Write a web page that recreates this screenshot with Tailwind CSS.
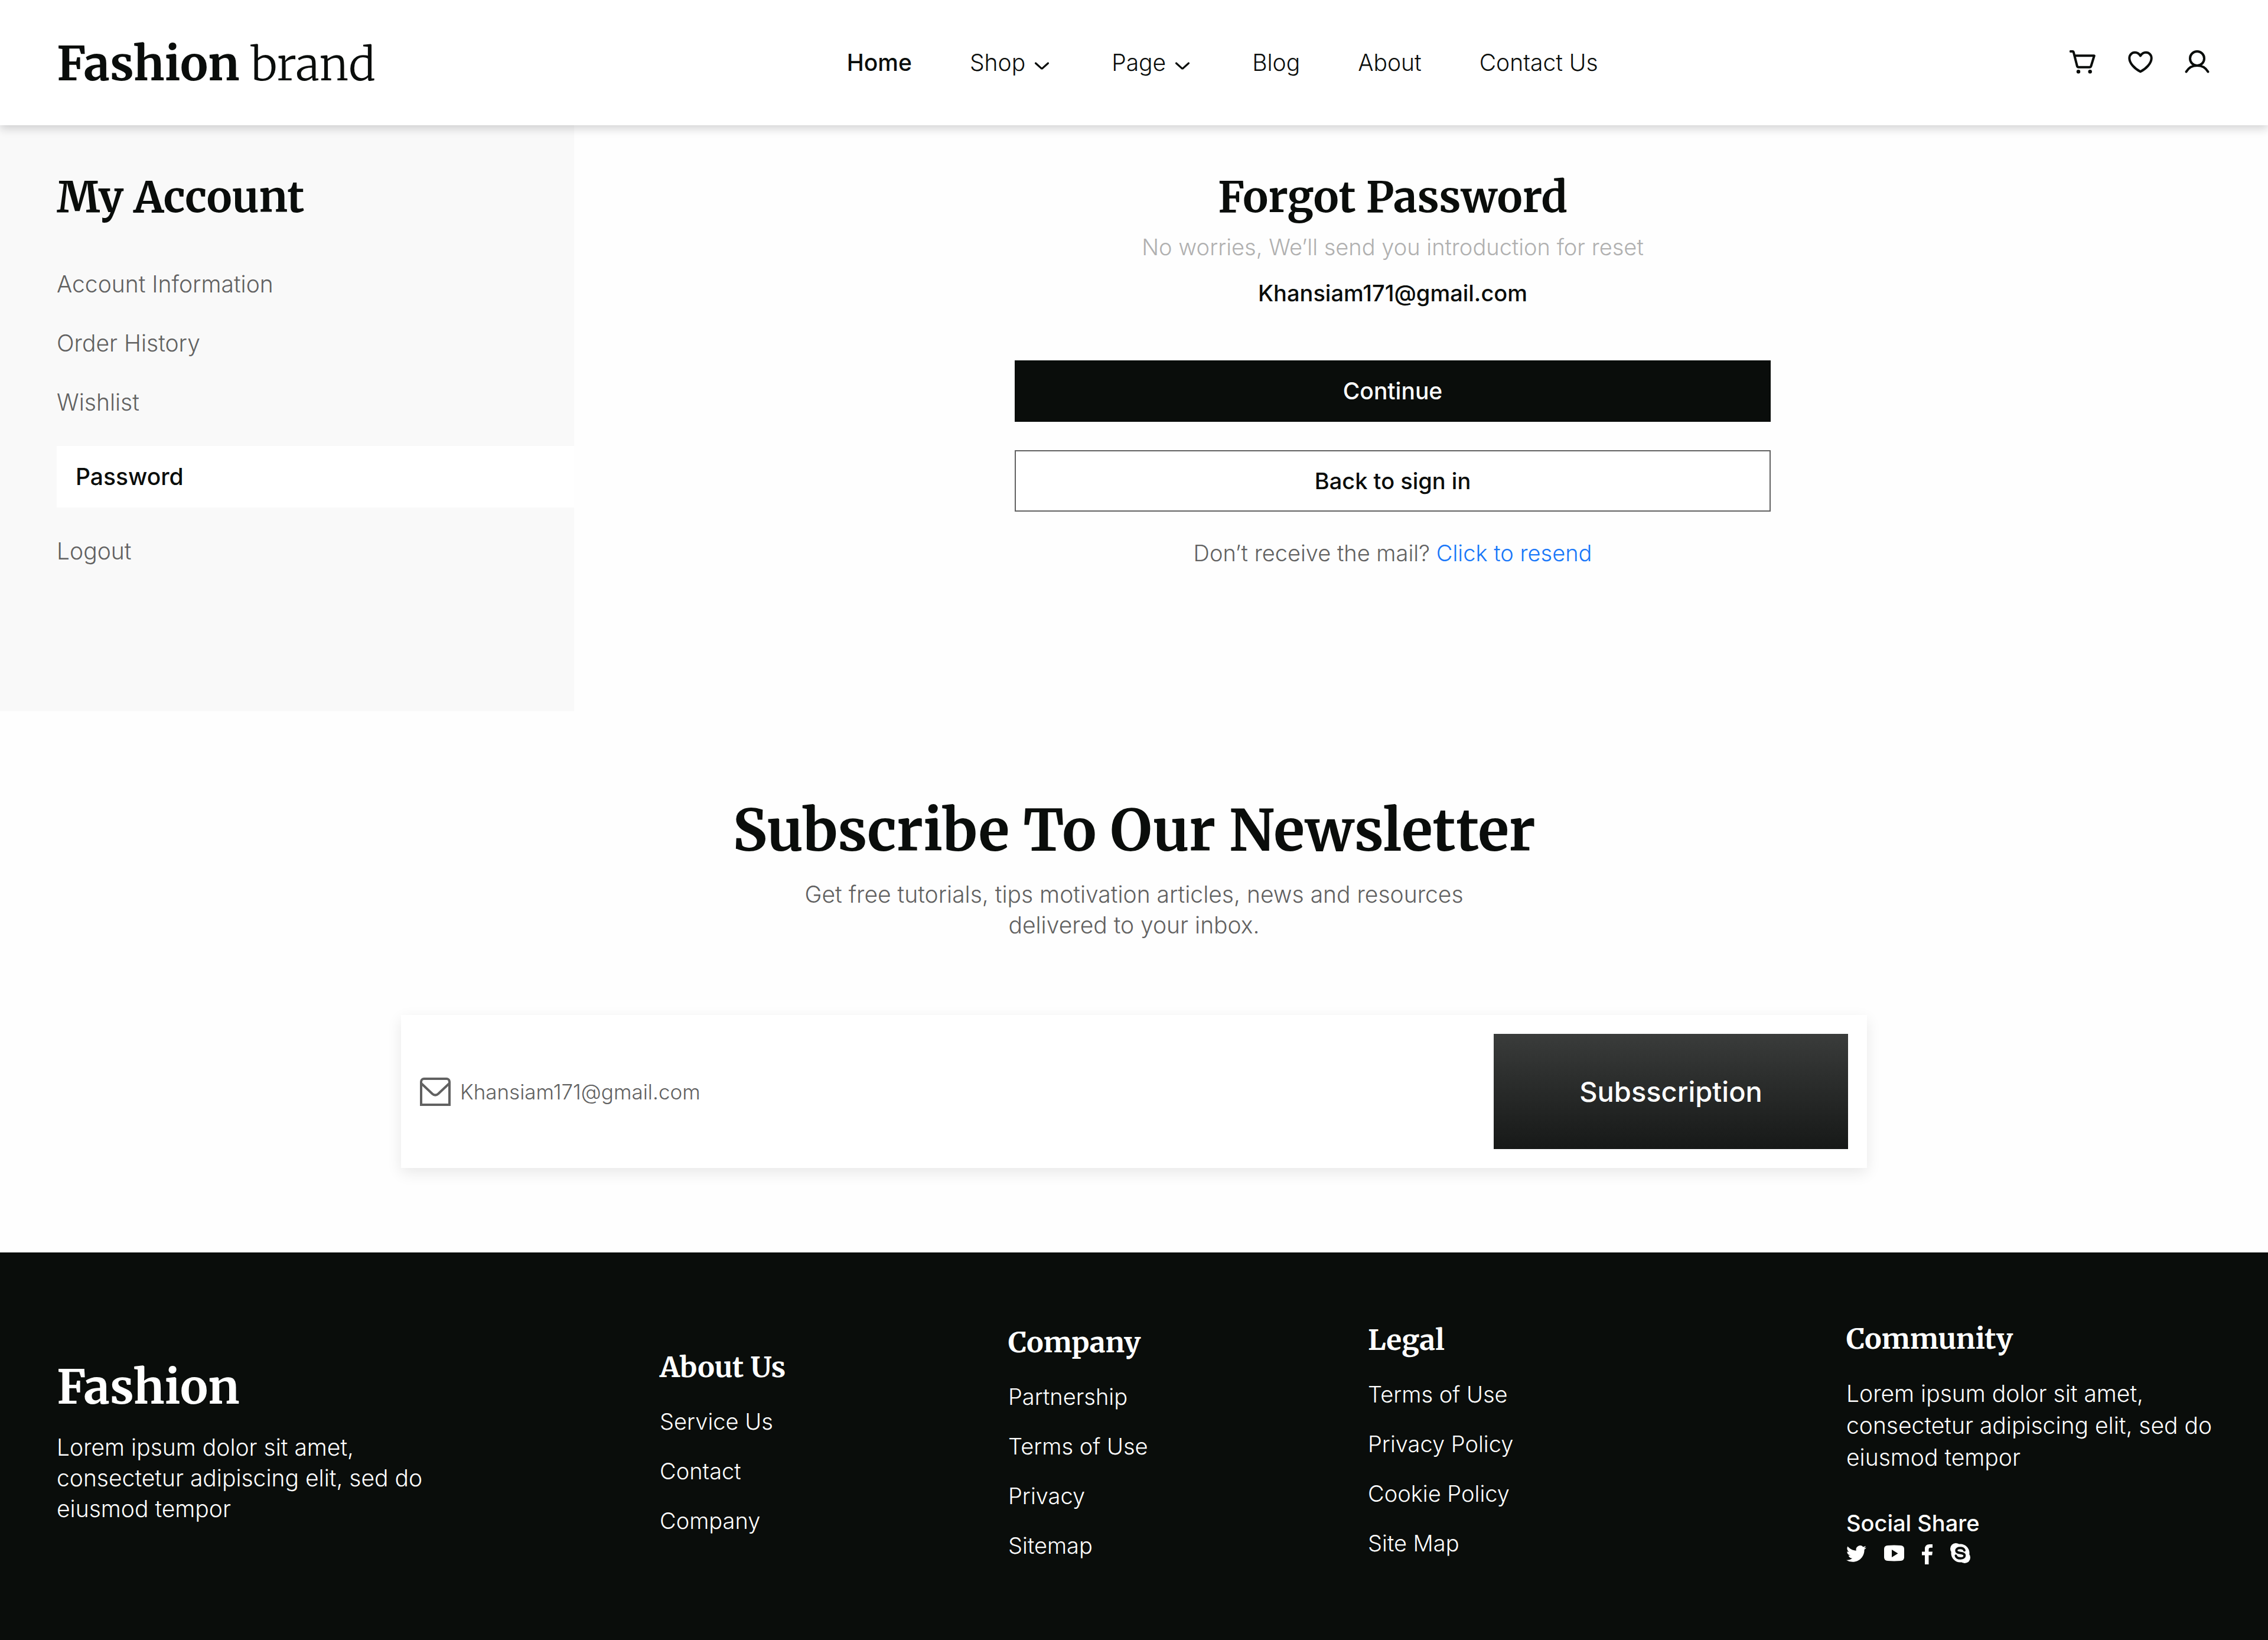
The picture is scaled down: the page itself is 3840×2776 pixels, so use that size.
<!DOCTYPE html>
<html lang="en">
<head>
<meta charset="utf-8">
<meta name="viewport" content="width=device-width, initial-scale=1">
<title>Fashion brand – Forgot Password</title>
<script src="https://cdn.jsdelivr.net/npm/@tailwindcss/browser@4"></script>
</head>
<body class="min-h-screen flex flex-col bg-[#fefefe] text-[#0a0d0b] font-['Inter','Liberation_Sans',sans-serif] font-light text-[39px] leading-[52px]">

<header class="relative z-10 flex items-center justify-between h-[212px] px-24 bg-white shadow-[0_6px_14px_rgba(20,20,30,0.18)]">
  <a href="#" class="pt-1 font-['Merriweather','DejaVu_Serif_Condensed',serif] text-[79px] leading-[96px] font-light"><strong class="font-bold">Fashion</strong> <span class="text-[76px]">brand</span></a>
  <nav aria-label="Main" class="flex items-center gap-[98px]">
    <a href="#" class="font-medium">Home</a>
    <button type="button" class="flex items-center gap-2">Shop
      <svg class="size-10" viewBox="0 0 40 40" fill="none" stroke="currentColor" stroke-width="3.200" stroke-linecap="round" stroke-linejoin="round" aria-hidden="true"><path d="M9.500 21 18.800 29.400q1.200 1 2.400 0L30.500 21"/></svg>
    </button>
    <button type="button" class="flex items-center gap-2">Page
      <svg class="size-10" viewBox="0 0 40 40" fill="none" stroke="currentColor" stroke-width="3.200" stroke-linecap="round" stroke-linejoin="round" aria-hidden="true"><path d="M9.500 21 18.800 29.400q1.200 1 2.400 0L30.500 21"/></svg>
    </button>
    <a href="#">Blog</a>
    <a href="#">About</a>
    <a href="#">Contact Us</a>
  </nav>
  <div class="flex items-center gap-12">
    <a href="#" aria-label="Cart"><svg class="size-12" viewBox="0 0 48 48" fill="none" stroke="currentColor" stroke-width="4" stroke-linecap="round" stroke-linejoin="round"><path d="M1.700 5H5.500q1 0 1.300 1.200L12.800 29.800q.5 1.900 2.400 1.900H34q1.900 0 2.400-1.900L41.800 12.300H8.300"/><circle cx="15" cy="39.300" r="3.200" fill="currentColor" stroke="none"/><circle cx="34.700" cy="39.300" r="3.200" fill="currentColor" stroke="none"/></svg></a>
    <a href="#" aria-label="Wishlist"><svg class="size-12" viewBox="0 0 48 48" fill="none" stroke="currentColor" stroke-width="4" stroke-linejoin="round"><path d="M24 12.500C22 9 18.500 6.700 14.700 6.700 9.300 6.700 5.300 11 5.300 16.500 5.300 25 14 34 24 39.300 34 34 42.700 25 42.700 16.500 42.700 11 38.700 6.700 33.300 6.700 29.500 6.700 26 9 24 12.500z"/></svg></a>
    <a href="#" aria-label="Account"><svg class="size-12" viewBox="0 0 48 48" fill="none" stroke="currentColor" stroke-width="4" stroke-linecap="round"><circle cx="24" cy="17" r="12"/><path d="M5.500 39.500C9.500 32.500 16.300 29 24 29S38.500 32.500 42.500 39.500"/></svg></a>
  </div>
</header>

<div class="flex items-stretch">
  <aside class="w-[972px] shrink-0 bg-[#f9f9f9] pt-[78px] pb-[245px] pl-24">
    <h2 class="font-['Merriweather','DejaVu_Serif_Condensed',serif] font-bold text-[72px] leading-[88px]">My Account</h2>
    <nav aria-label="Account" class="mt-[77px] flex flex-col gap-12 text-[#616161]">
      <a href="#">Account Information</a>
      <a href="#">Order History</a>
      <a href="#">Wishlist</a>
      <a href="#" aria-current="page" class="bg-white px-8 py-[26px] font-medium text-[#0a0d0b]">Password</a>
      <a href="#">Logout</a>
    </nav>
  </aside>
  <main class="grow flex flex-col items-center pt-[78px] pr-24 text-center">
    <h1 class="font-['Merriweather','DejaVu_Serif_Condensed',serif] font-bold text-[72px] leading-[88px]">Forgot Password</h1>
    <p class="mt-[14px] text-[38px] text-[#b0b0b0]">No worries, We’ll send you introduction for reset</p>
    <p class="mt-[26px] font-medium text-[38px]">Khansiam171@gmail.com</p>
    <button type="button" class="mt-[88px] w-[1280px] max-w-full h-[104px] bg-[#0a0d0b] text-white font-medium">Continue</button>
    <button type="button" class="mt-12 w-[1280px] max-w-full h-[104px] border-2 border-[#616161] bg-white font-medium text-[38px]">Back to sign in</button>
    <p class="mt-11 text-[38px] text-[#616161]">Don’t receive the mail? <a href="#" class="text-[#1877f9]">Click to resend</a></p>
  </main>
</div>

<section class="flex flex-col items-center px-24 pt-[142px] pb-[143px] text-center">
  <h2 class="font-['Merriweather','DejaVu_Serif_Condensed',serif] font-bold text-[97px] leading-[120px]">Subscribe To Our Newsletter</h2>
  <p class="mt-[22px] max-w-[1200px] text-[#616161]">Get free tutorials, tips motivation articles, news and resources delivered to your inbox.</p>
  <form class="mt-[126px] flex w-full max-w-[2482px] items-center justify-between bg-white p-8 shadow-[0_8px_24px_rgba(0,0,0,0.09)]">
    <label class="flex grow items-center gap-4 text-[#616161]">
      <svg class="w-[52px] h-12 shrink-0" viewBox="0 0 52 48" fill="none" stroke="currentColor" stroke-width="4" role="img" aria-label="Email"><path d="M2 7a5 5 0 0 1 5-5h38a5 5 0 0 1 5 5v39H2zM3 10.500 21 27.500q5 4.400 10 0L49 10.500"/></svg>
      <input type="email" placeholder="Khansiam171@gmail.com" class="grow bg-transparent text-[35px] leading-[48px] outline-none placeholder:text-[#616161] placeholder:opacity-100">
    </label>
    <button type="submit" class="w-[600px] h-[195px] bg-linear-to-b from-[#3a3c3b] to-[#171918] text-white font-medium text-[47px]">Subsscription</button>
  </form>
</section>

<footer class="grow grid grid-cols-[1021fr_590fr_609fr_806fr_622fr] items-center bg-[#0a0d0b] px-24 pt-[115px] pb-[128px] text-white">
  <div class="flex flex-col gap-7 pb-1">
    <h2 class="font-['Merriweather','DejaVu_Serif_Condensed',serif] font-bold text-[79px] leading-[96px]">Fashion</h2>
    <p class="max-w-[640px]">Lorem ipsum dolor sit amet, consectetur adipiscing elit, sed do eiusmod tempor</p>
  </div>
  <div class="flex flex-col gap-9">
    <h3 class="font-['Merriweather','DejaVu_Serif_Condensed',serif] font-bold text-[48px] leading-[60px]">About Us</h3>
    <ul class="flex flex-col gap-8 text-[38px]">
      <li><a href="#">Service Us</a></li>
      <li><a href="#">Contact</a></li>
      <li><a href="#">Company</a></li>
    </ul>
  </div>
  <div class="flex flex-col gap-9">
    <h3 class="font-['Merriweather','DejaVu_Serif_Condensed',serif] font-bold text-[48px] leading-[60px]">Company</h3>
    <ul class="flex flex-col gap-8 text-[38px]">
      <li><a href="#">Partnership</a></li>
      <li><a href="#">Terms of Use</a></li>
      <li><a href="#">Privacy</a></li>
      <li><a href="#">Sitemap</a></li>
    </ul>
  </div>
  <div class="flex flex-col gap-9 pb-2">
    <h3 class="font-['Merriweather','DejaVu_Serif_Condensed',serif] font-bold text-[48px] leading-[60px]">Legal</h3>
    <ul class="flex flex-col gap-8 text-[38px]">
      <li><a href="#">Terms of Use</a></li>
      <li><a href="#">Privacy Policy</a></li>
      <li><a href="#">Cookie Policy</a></li>
      <li><a href="#">Site Map</a></li>
    </ul>
  </div>
  <div class="flex flex-col pl-1 -mr-2">
    <h3 class="font-['Merriweather','DejaVu_Serif_Condensed',serif] font-bold text-[48px] leading-[60px]">Community</h3>
    <p class="mt-9 leading-[54px]">Lorem ipsum dolor sit amet, consectetur adipiscing elit, sed do eiusmod tempor</p>
    <h4 class="mt-[58px] font-medium text-[38px]">Social Share</h4>
    <div class="mt-2 flex items-center gap-[30px]">
      <a href="#" aria-label="Twitter"><svg class="w-[34px] h-9" viewBox="0 0 24 24" fill="currentColor"><path d="M23.953 4.570a10 10 0 01-2.825.775 4.958 4.958 0 002.163-2.723c-.951.555-2.005.959-3.127 1.184a4.920 4.920 0 00-8.384 4.482C7.690 8.095 4.067 6.130 1.640 3.162a4.822 4.822 0 00-.666 2.475c0 1.710.87 3.213 2.188 4.096a4.904 4.904 0 01-2.228-.616v.06a4.923 4.923 0 003.946 4.827 4.996 4.996 0 01-2.212.085 4.936 4.936 0 004.604 3.417 9.867 9.867 0 01-6.102 2.105c-.39 0-.779-.023-1.170-.067a13.995 13.995 0 007.557 2.209c9.053 0 13.998-7.496 13.998-13.985 0-.21 0-.42-.015-.63A9.935 9.935 0 0024 4.590z"/></svg></a>
      <a href="#" aria-label="YouTube"><svg class="w-[34px] h-9" viewBox="0 0 34 36" fill="currentColor"><path fill-rule="evenodd" d="M6 4Q17 3.200 28 4 34 4.400 34 10V24Q34 29.500 28 30 17 30.800 6 30 0 29.500 0 24V10Q0 4.400 6 4zM13 11V24L23.500 17.500z"/></svg></a>
      <a href="#" aria-label="Facebook"><svg class="w-[18px] h-9" viewBox="0 0 18 36" fill="currentColor"><path d="M5 36V20.500H0V14.500H5V10Q5 2 13 2H18V7.700H14.500Q11.500 7.700 11.500 10.700V14.500H18L17.200 20.500H11.500V36z"/></svg></a>
      <a href="#" aria-label="Skype"><svg class="w-[34px] h-9" viewBox="0 0 34 36"><g fill="currentColor"><circle cx="17" cy="17" r="15.500"/><circle cx="9.500" cy="9.500" r="9.500"/><circle cx="24.500" cy="24.500" r="9.500"/></g><path d="M24 12.300C23 9.500 20.500 8.200 17 8.200 13 8.200 10.300 9.800 10.300 12.500 10.300 19 24.300 14.500 24.300 21.200 24.300 24.200 21.200 25.800 17.300 25.800 13 25.800 10.200 24.200 9.500 21.200" fill="none" stroke="#0a0d0b" stroke-width="4" stroke-linecap="round"/></svg></a>
    </div>
  </div>
</footer>
</body>
</html>
